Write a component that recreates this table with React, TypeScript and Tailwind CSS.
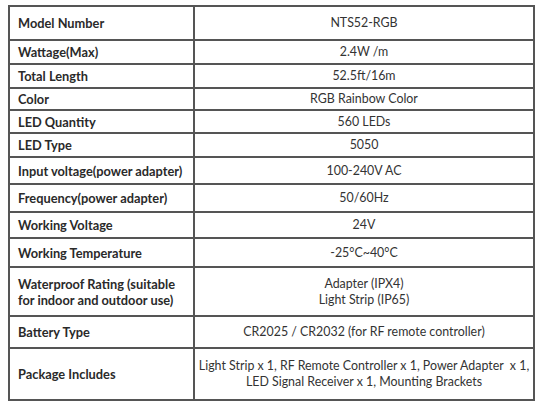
const ROWS: { label: React.ReactNode; value: React.ReactNode; h: string }[] = [
  { label: "Model Number", value: "NTS52-RGB", h: "h-[34px]" },
  { label: "Wattage(Max)", value: "2.4W /m", h: "h-[24px]" },
  { label: "Total Length", value: "52.5ft/16m", h: "h-[24px]" },
  { label: "Color", value: "RGB  Rainbow Color", h: "h-[22px]" },
  { label: "LED Quantity", value: "560 LEDs", h: "h-[23px]" },
  { label: "LED Type", value: "5050", h: "h-[24px]" },
  { label: "Input voltage(power adapter)", value: "100-240V AC", h: "h-[27px]" },
  { label: "Frequency(power adapter)", value: "50/60Hz", h: "h-[28px]" },
  { label: "Working Voltage", value: "24V", h: "h-[26px]" },
  { label: "Working Temperature", value: "-25°C~40°C", h: "h-[29px]" },
  {
    label: (
      <>
        Waterproof Rating (suitable
        <br />
        for indoor and outdoor use)
      </>
    ),
    value: (
      <>
        Adapter (IPX4)
        <br />
        Light Strip (IP65)
      </>
    ),
    h: "h-[49px]",
  },
  { label: "Battery Type", value: "CR2025 / CR2032 (for RF remote controller)", h: "h-[32px]" },
  {
    label: "Package Includes",
    value: (
      <>
        Light Strip x 1, RF Remote Controller x 1, Power Adapter&nbsp; x 1,
        <br />
        LED Signal Receiver x 1, Mounting Brackets
      </>
    ),
    h: "h-[52px]",
  },
];

export default function App() {
  return (
    <div className="w-[550px] h-[414px] bg-white pt-[5px] pl-[8px] font-['Lato',sans-serif] text-[#333]">
      <table className="w-[527px] border-collapse border-2 border-[#555] leading-[16px]">
        <tbody>
          {ROWS.map((r, i) => (
            <tr key={i} className={r.h}>
              <td className="w-[185px] border-2 border-[#555] px-[8px] p-0 text-[12.8px] font-bold text-[#2a2a2a] align-middle whitespace-nowrap">
                {r.label}
              </td>
              <td className="border-2 border-[#555] p-0 text-[12.4px] text-center align-middle whitespace-nowrap">
                {r.value}
              </td>
            </tr>
          ))}
        </tbody>
      </table>
    </div>
  );
}
